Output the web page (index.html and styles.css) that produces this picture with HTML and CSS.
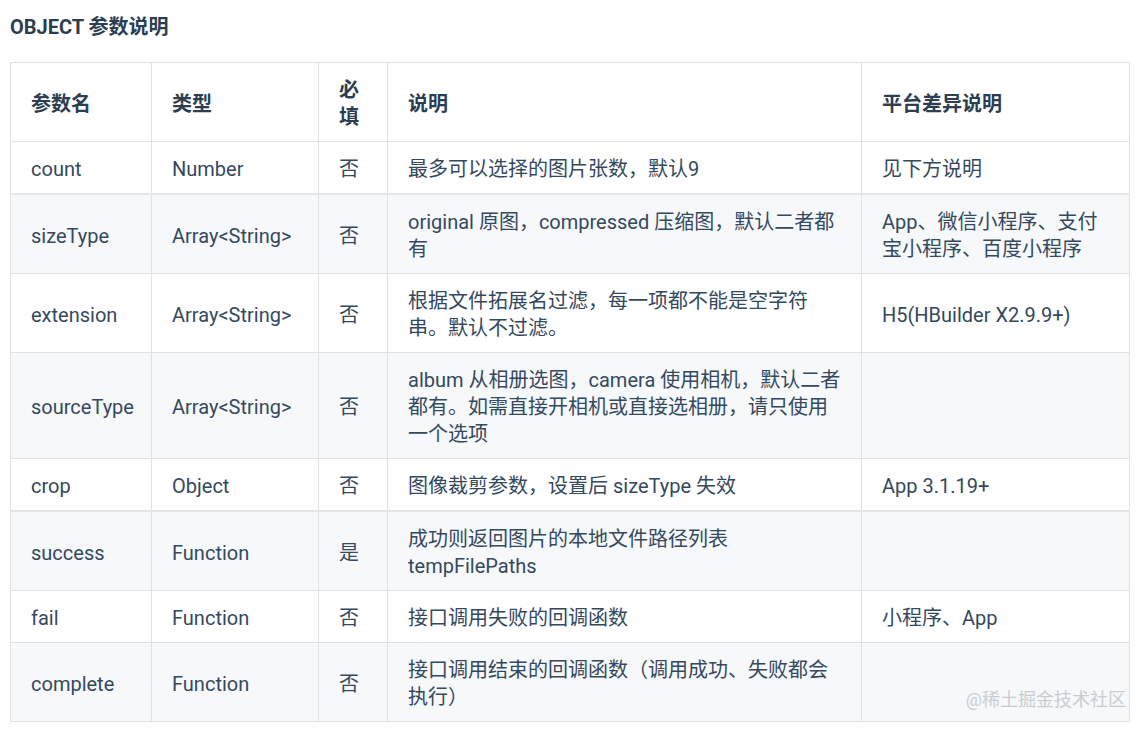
FILE: index.html
```html
<!DOCTYPE html>
<html lang="zh-CN">
<head>
<meta charset="utf-8">
<title>OBJECT 参数说明</title>
<link rel="stylesheet" href="styles.css">
</head>
<body>
<div class="page">
  <h3 class="title">OBJECT 参数说明</h3>
  <table class="params">
    <colgroup>
      <col class="c-name">
      <col class="c-type">
      <col class="c-req">
      <col class="c-desc">
      <col class="c-plat">
    </colgroup>
    <thead>
      <tr>
        <th>参数名</th>
        <th>类型</th>
        <th>必填</th>
        <th>说明</th>
        <th>平台差异说明</th>
      </tr>
    </thead>
    <tbody>
      <tr>
        <td>count</td>
        <td>Number</td>
        <td>否</td>
        <td>最多可以选择的图片张数，默认9</td>
        <td>见下方说明</td>
      </tr>
      <tr class="thick">
        <td>sizeType</td>
        <td>Array&lt;String&gt;</td>
        <td>否</td>
        <td>original 原图，compressed 压缩图，默认二者都有</td>
        <td>App、微信小程序、支付宝小程序、百度小程序</td>
      </tr>
      <tr>
        <td>extension</td>
        <td>Array&lt;String&gt;</td>
        <td>否</td>
        <td>根据文件拓展名过滤，每一项都不能是空字符串。默认不过滤。</td>
        <td>H5(HBuilder X2.9.9+)</td>
      </tr>
      <tr>
        <td>sourceType</td>
        <td>Array&lt;String&gt;</td>
        <td>否</td>
        <td>album 从相册选图，camera 使用相机，默认二者都有。如需直接开相机或直接选相册，请只使用一个选项</td>
        <td></td>
      </tr>
      <tr>
        <td>crop</td>
        <td>Object</td>
        <td>否</td>
        <td>图像裁剪参数，设置后 sizeType 失效</td>
        <td>App 3.1.19+</td>
      </tr>
      <tr class="thick">
        <td>success</td>
        <td>Function</td>
        <td>是</td>
        <td>成功则返回图片的本地文件路径列表 tempFilePaths</td>
        <td></td>
      </tr>
      <tr>
        <td>fail</td>
        <td>Function</td>
        <td>否</td>
        <td>接口调用失败的回调函数</td>
        <td>小程序、App</td>
      </tr>
      <tr>
        <td>complete</td>
        <td>Function</td>
        <td>否</td>
        <td>接口调用结束的回调函数（调用成功、失败都会执行）</td>
        <td></td>
      </tr>
    </tbody>
  </table>
  <div class="watermark">@稀土掘金技术社区</div>
</div>
</body>
</html>
```

FILE: styles.css
```css
html, body {
  margin: 0;
  padding: 0;
  background: #ffffff;
}

body {
  font-family: Roboto, "Noto Sans CJK SC", sans-serif;
  color: #2c3e50;
}

.page {
  position: relative;
  width: 1148px;
  height: 734px;
  padding: 0 0 0 10px;
  box-sizing: border-box;
  overflow: hidden;
}

.title {
  margin: 0;
  padding-top: 13px;
  height: 62px;
  box-sizing: border-box;
  font-size: 20px;
  line-height: 28px;
  font-weight: 700;
  color: #2c3e50;
}

.params {
  border-collapse: collapse;
  table-layout: fixed;
  width: 1119px;
  font-size: 20px;
  line-height: 27px;
}

.c-name { width: 141px; }
.c-type { width: 167px; }
.c-req { width: 69px; }
.c-desc { width: 474px; }
.c-plat { width: 268px; }

.params th,
.params td {
  border: 1px solid #dfe2e5;
  padding: 14px 20px 10px;
  text-align: left;
  vertical-align: middle;
}

.params th {
  font-weight: 700;
  color: #2c3e50;
}

.params td {
  color: #34495e;
}

.params tbody tr:nth-child(even) {
  background: #f6f8fa;
}

.params tr.thick td {
  border-top: 2px solid #e3e5e8;
}

.watermark {
  position: absolute;
  right: 22px;
  top: 688px;
  font-size: 18px;
  line-height: 24px;
  color: #c9cdd2;
}
```
